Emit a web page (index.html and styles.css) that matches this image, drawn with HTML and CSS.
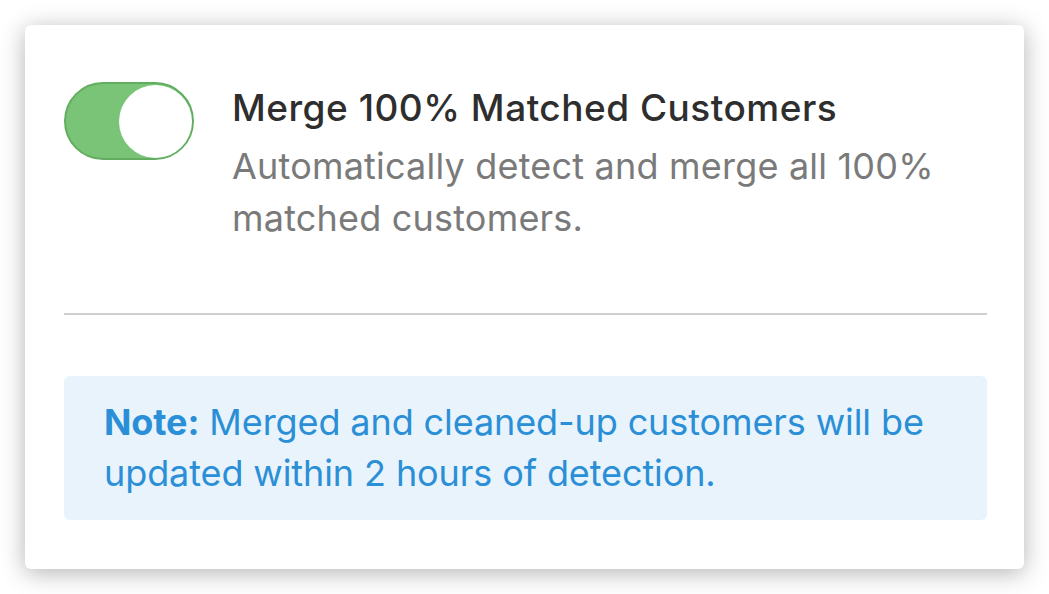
FILE: index.html
```html
<!DOCTYPE html>
<html>
<head>
<meta charset="utf-8">
<link rel="stylesheet" href="styles.css">
</head>
<body>
<div class="card">
  <div class="setting">
    <div class="toggle on"><span class="knob"></span></div>
    <div class="setting-text">
      <div class="title">Merge 100% Matched Customers</div>
      <div class="desc">Automatically detect and merge all 100% matched customers.</div>
    </div>
  </div>
  <hr class="divider">
  <div class="note"><strong>Note:</strong> Merged and cleaned-up customers will be updated within 2 hours of detection.</div>
</div>
</body>
</html>
```

FILE: styles.css
```css
html, body {
  margin: 0;
  padding: 0;
  background: #ffffff;
}
body {
  width: 1049px;
  height: 594px;
  overflow: hidden;
  font-family: Inter, "Open Sans", sans-serif;
}
.card {
  box-sizing: border-box;
  margin: 25px 0 0 25px;
  width: 999px;
  height: 544px;
  background: #fff;
  border-radius: 6px;
  box-shadow: 0 4px 24px rgba(0,0,0,0.30);
  padding: 57px 37px 0 39px;
}
.setting {
  display: flex;
  align-items: flex-start;
  gap: 38px;
}
.toggle {
  box-sizing: border-box;
  flex: none;
  width: 130px;
  height: 78px;
  border-radius: 39px;
  background: #79c476;
  border: 2px solid #62ad5f;
  position: relative;
}
.knob {
  position: absolute;
  top: 1px;
  right: 0px;
  width: 73px;
  height: 73px;
  border-radius: 50%;
  background: #fff;
}
.setting-text {
  margin-top: 0;
}
.title {
  font-size: 37px;
  line-height: 52px;
  letter-spacing: 0.5px;
  color: #2e2e2e;
  font-weight: 500;
}
.desc {
  margin-top: 6px;
  font-size: 36px;
  line-height: 52px;
  letter-spacing: 0.2px;
  color: #7a7a7a;
  width: 752px;
}
.divider {
  border: 0;
  height: 2px;
  background: #cfcfcf;
  margin: 69px 0 0 0;
}
.note {
  margin-top: 61px;
  background: #e9f3fb;
  border-radius: 6px;
  padding: 21px 42px 21px 40px;
  font-size: 36px;
  line-height: 51px;
  letter-spacing: -0.1px;
  color: #2a8fd7;
}
.note strong {
  font-weight: 700;
}
```
